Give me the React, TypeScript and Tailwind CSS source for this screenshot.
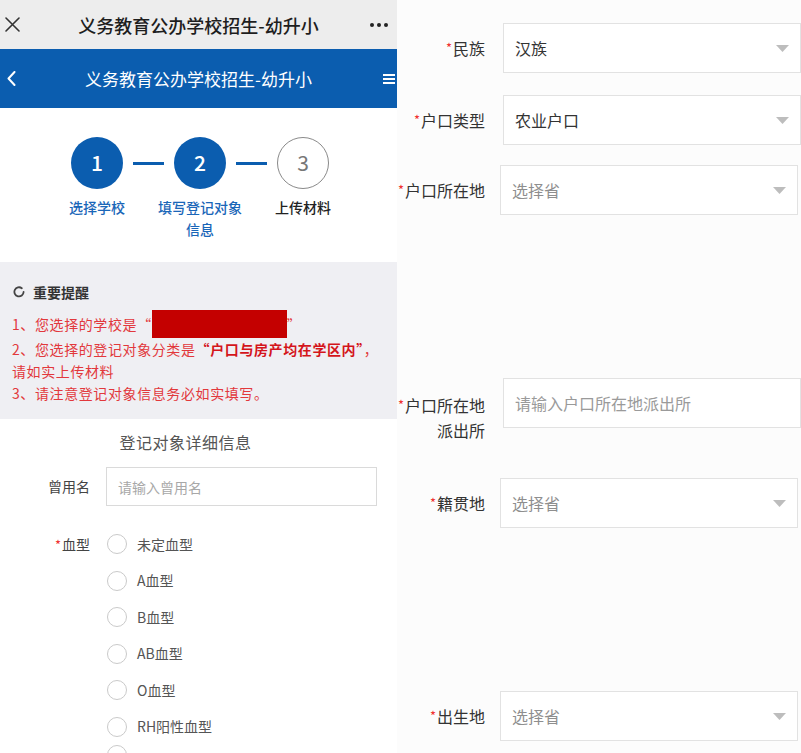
import React from "react";

const Star = () => (
  <span className="text-[#f03030] text-[13px] align-[2px] mr-[1px]">*</span>
);

const Arrow = () => (
  <svg width="13" height="7" viewBox="0 0 13 7" className="shrink-0">
    <path d="M0 0 L13 0 L6.5 7 Z" fill="#bdbdbd" />
  </svg>
);

function LeftPanel() {
  const bloods = ["未定血型", "A血型", "B血型", "AB血型", "O血型", "RH阳性血型"];
  return (
    <div className="w-[397px] shrink-0 flex flex-col bg-white">
      {/* top app bar */}
      <div className="h-[49px] shrink-0 bg-[#ededed] grid grid-cols-[40px_1fr_40px] items-center">
        <div className="pl-[5px] flex items-center">
          <svg width="15" height="15" viewBox="0 0 15 15">
            <path d="M1 1 L14 14 M14 1 L1 14" stroke="#333" strokeWidth="1.6" strokeLinecap="round" />
          </svg>
        </div>
        <div className="text-center text-[18px] leading-[22px] font-medium text-[#1e1e1e] whitespace-nowrap">
          义务教育公办学校招生-幼升小
        </div>
        <div className="pl-[13px] flex items-center gap-[3px]">
          <span className="w-[4px] h-[4px] rounded-full bg-[#222]" />
          <span className="w-[4px] h-[4px] rounded-full bg-[#222]" />
          <span className="w-[4px] h-[4px] rounded-full bg-[#222]" />
        </div>
      </div>
      {/* blue nav */}
      <div className="h-[59px] shrink-0 bg-[#0b5daf] grid grid-cols-[40px_1fr_40px] items-center text-white">
        <div className="pl-[7px] flex items-center">
          <svg width="9" height="15" viewBox="0 0 9 15">
            <path d="M7.5 1 L1.5 7.5 L7.5 14" stroke="#fff" strokeWidth="2" fill="none" strokeLinecap="round" strokeLinejoin="round" />
          </svg>
        </div>
        <div className="text-center text-[17px] leading-[22px] whitespace-nowrap">义务教育公办学校招生-幼升小</div>
        <div className="pl-[26px] flex flex-col gap-[2px]">
          <span className="w-[12px] h-[2px] bg-white" />
          <span className="w-[12px] h-[2px] bg-white" />
          <span className="w-[12px] h-[2px] bg-white" />
        </div>
      </div>
      {/* steps */}
      <div className="pt-[29px] pb-[22px] flex flex-col items-center">
        <div className="flex items-center ml-[3px]">
          <div className="w-[52px] h-[52px] rounded-full bg-[#0b5daf] flex items-center justify-center text-white text-[21px] font-medium">1</div>
          <div className="w-[31px] h-[3px] bg-[#0b5daf] mx-[10px]" />
          <div className="w-[52px] h-[52px] rounded-full bg-[#0b5daf] flex items-center justify-center text-white text-[21px] font-medium">2</div>
          <div className="w-[31px] h-[3px] bg-[#0b5daf] mx-[10px]" />
          <div className="w-[52px] h-[52px] rounded-full bg-white border-[1.5px] border-[#8a8a8a] flex items-center justify-center text-[#777] text-[21px]">3</div>
        </div>
        <div className="flex mt-[7px] ml-[3px] text-[14px] leading-[22px] font-medium">
          <div className="w-[103px] text-center text-[#1a66b8]">选择学校</div>
          <div className="w-[103px] text-center text-[#1a66b8]">填写登记对象<br />信息</div>
          <div className="w-[103px] text-center text-[#222]">上传材料</div>
        </div>
      </div>
      {/* reminder */}
      <div className="bg-[#efeff3] pt-[19px] pb-[15px] px-[12px]">
        <div className="h-[22px] flex items-center">
          <svg width="12" height="12" viewBox="0 0 12 12" className="ml-[1px]">
            <path d="M8.8 2.2 A4.6 4.6 0 1 0 10.6 6" stroke="#444" strokeWidth="1.8" fill="none" strokeLinecap="round" />
          </svg>
          <span className="ml-[8px] text-[14px] font-bold text-[#333]">重要提醒</span>
        </div>
        <div className="mt-[7px] text-[14px] leading-[22px] tracking-[0.6px] text-[#e2383c] whitespace-nowrap">
          <div className="h-[28px] flex items-center">
            <span>1、您选择的学校是“</span>
            <span className="inline-block w-[135px] h-[28px] bg-[#c40000]" />
            <span>”</span>
          </div>
          <div>
            2、您选择的登记对象分类是<span className="font-bold text-[#d4151b]">“户口与房产均在学区内”</span>，
          </div>
          <div>请如实上传材料</div>
          <div>3、请注意登记对象信息务必如实填写。</div>
        </div>
      </div>
      {/* detail title */}
      <div className="mt-[12px] flex justify-center pr-[26px] text-[16px] leading-[22px] tracking-[0.5px] text-[#555]">
        登记对象详细信息
      </div>
      {/* former name */}
      <div className="mt-[14px] flex items-center">
        <div className="w-[90px] text-right text-[14px] text-[#444]">曾用名</div>
        <input
          className="ml-[16px] w-[271px] h-[39px] border border-[#dadada] px-[11px] text-[14px] text-[#333] placeholder:text-[#a8a8a8] outline-none bg-white"
          placeholder="请输入曾用名"
        />
      </div>
      {/* blood type */}
      <div className="mt-[20px] flex items-start">
        <div className="w-[90px] h-[36.5px] flex items-center justify-end text-[14px] text-[#444]">
          <Star />血型
        </div>
        <div className="ml-[17px] flex flex-col">
          {bloods.map((b) => (
            <div key={b} className="h-[36.5px] flex items-center">
              <span className="w-[20px] h-[20px] rounded-full border-[1.5px] border-[#cacaca] bg-white" />
              <span className="ml-[10px] text-[14px] text-[#555]">{b}</span>
            </div>
          ))}
          <div className="h-[36.5px] flex items-center -mt-[8px]">
            <span className="w-[20px] h-[20px] rounded-full border-[1.5px] border-[#cacaca] bg-white" />
          </div>
        </div>
      </div>
    </div>
  );
}

function SelectBox({ value, placeholder, ml }: { value?: string; placeholder?: string; ml: "a" | "b" }) {
  return (
    <div
      className={
        (ml === "a" ? "ml-[18px] " : "ml-[15px] ") +
        "w-[298px] h-[50px] shrink-0 border border-[#e2e2e2] bg-white flex items-center justify-between pl-[11px] pr-[11px]"
      }
    >
      {value ? (
        <span className="text-[16px] text-[#333]">{value}</span>
      ) : (
        <span className="text-[16px] text-[#8e8e8e]">{placeholder}</span>
      )}
      <Arrow />
    </div>
  );
}

function RightPanel() {
  const label = "w-[88px] shrink-0 text-right text-[16px] text-[#333] whitespace-nowrap";
  return (
    <div className="flex-1 bg-[#fcfcfc] pt-[23px] flex flex-col">
      <div className="flex items-center">
        <div className={label}><Star />民族</div>
        <SelectBox value="汉族" ml="a" />
      </div>
      <div className="mt-[22px] flex items-center">
        <div className={label}><Star />户口类型</div>
        <SelectBox value="农业户口" ml="a" />
      </div>
      <div className="mt-[20px] flex items-center">
        <div className={label}><Star />户口所在地</div>
        <SelectBox placeholder="选择省" ml="b" />
      </div>
      <div className="mt-[163px] flex items-start">
        <div className={label + " pt-[14px] leading-[25px]"}>
          <Star />户口所在地<br />派出所
        </div>
        <input
          className="ml-[18px] w-[298px] h-[50px] shrink-0 border border-[#e2e2e2] bg-white px-[11px] text-[16px] text-[#333] placeholder:text-[#9a9a9a] outline-none"
          placeholder="请输入户口所在地派出所"
        />
      </div>
      <div className="mt-[35px] flex items-center">
        <div className={label}><Star />籍贯地</div>
        <SelectBox placeholder="选择省" ml="b" />
      </div>
      <div className="mt-[163px] flex items-center">
        <div className={label}><Star />出生地</div>
        <SelectBox placeholder="选择省" ml="b" />
      </div>
    </div>
  );
}

export default function App() {
  return (
    <div className="flex h-[753px] w-[801px] overflow-hidden bg-white font-['Noto_Sans_CJK_SC',sans-serif]">
      <LeftPanel />
      <RightPanel />
    </div>
  );
}
